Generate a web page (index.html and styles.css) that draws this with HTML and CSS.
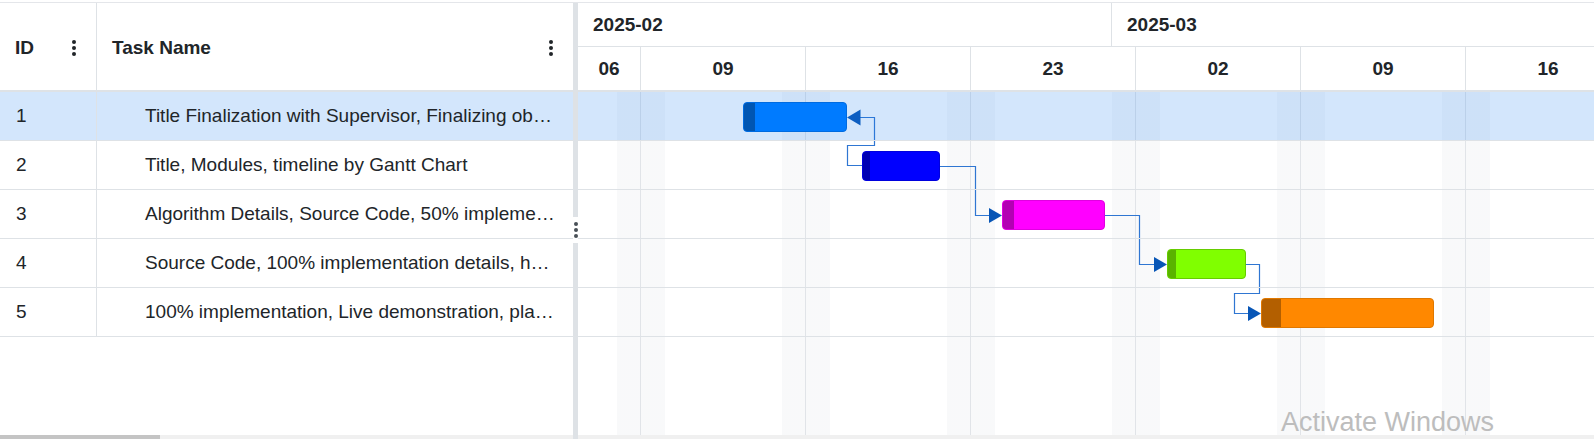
FILE: index.html
```html
<!DOCTYPE html>
<html lang="en">
<head>
<meta charset="utf-8">
<title>Gantt</title>
<link rel="stylesheet" href="styles.css">
</head>
<body>
<div class="gantt">
  <div class="grid-pane">
    <div class="grid-header">
      <div class="hcell col-id"><span>ID</span><svg class="kebab" width="4" height="16" viewBox="0 0 4 16"><circle cx="2" cy="2" r="2"/><circle cx="2" cy="8" r="2"/><circle cx="2" cy="14" r="2"/></svg></div>
      <div class="hcell col-name"><span>Task Name</span><svg class="kebab" width="4" height="16" viewBox="0 0 4 16"><circle cx="2" cy="2" r="2"/><circle cx="2" cy="8" r="2"/><circle cx="2" cy="14" r="2"/></svg></div>
    </div>
    <div class="grid-rows">
      <div class="grow selected"><div class="cell col-id">1</div><div class="cell col-name">Title Finalization with Supervisor, Finalizing objectives and scope</div></div>
      <div class="grow"><div class="cell col-id">2</div><div class="cell col-name">Title, Modules, timeline by Gantt Chart</div></div>
      <div class="grow"><div class="cell col-id">3</div><div class="cell col-name">Algorithm Details, Source Code, 50% implementation details</div></div>
      <div class="grow"><div class="cell col-id">4</div><div class="cell col-name">Source Code, 100% implementation details, hardware setup</div></div>
      <div class="grow"><div class="cell col-id">5</div><div class="cell col-name">100% implementation, Live demonstration, plagiarism report</div></div>
    </div>
    <div class="filler"></div>
    <div class="hscroll"><div class="thumb"></div></div>
  </div>

  <div class="splitter">
    <div class="split-handle"><svg width="4" height="16" viewBox="0 0 4 16"><circle cx="2" cy="2" r="2"/><circle cx="2" cy="8" r="2"/><circle cx="2" cy="14" r="2"/></svg></div>
  </div>

  <div class="chart-pane">
    <div class="timeline">
      <div class="tier tier-month">
        <div class="month feb">2025-02</div>
        <div class="month mar">2025-03</div>
      </div>
      <div class="tier tier-week">
        <div class="wk first">06</div>
        <div class="wk">09</div>
        <div class="wk">16</div>
        <div class="wk">23</div>
        <div class="wk">02</div>
        <div class="wk">09</div>
        <div class="wk">16</div>
      </div>
    </div>
    <div class="chart-body">
      <div class="chart-cols">
        <div class="col first"></div>
        <div class="col"></div>
        <div class="col"></div>
        <div class="col"></div>
        <div class="col"></div>
        <div class="col"></div>
        <div class="col"></div>
      </div>
      <div class="chart-rows">
        <div class="crow selected"><div class="bar c-blue" style="left:165px;width:104px"><div class="progress" style="width:11px"></div></div></div>
        <div class="crow"><div class="bar c-navy" style="left:284px;width:78px"><div class="progress" style="width:7px"></div></div></div>
        <div class="crow"><div class="bar c-magenta" style="left:424px;width:103px"><div class="progress" style="width:11px"></div></div></div>
        <div class="crow"><div class="bar c-green" style="left:589px;width:79px"><div class="progress" style="width:8px"></div></div></div>
        <div class="crow"><div class="bar c-orange" style="left:683px;width:173px"><div class="progress" style="width:19px"></div></div></div>
      </div>
      <svg class="connectors" width="1016" height="345" viewBox="0 0 1016 345">
        <path class="line" d="M284 73.5 H269.5 V53.5 H296.5 V25.5 H282"/>
        <polygon class="arrow" points="269,25.5 282.5,17.5 282.5,33.5"/>
        <path class="line" d="M362 74.5 H397.5 V123.5 H411"/>
        <polygon class="arrow" points="424,123.5 411,116 411,131"/>
        <path class="line" d="M527 123.5 H561.5 V172.5 H576"/>
        <polygon class="arrow" points="589,172.5 576,165 576,180"/>
        <path class="line" d="M668 172.5 H681.5 V201.5 H656.5 V221.5 H670"/>
        <polygon class="arrow" points="683,221.5 670,214 670,229"/>
      </svg>
    </div>
    <div class="hscroll"></div>
  </div>

  <div class="watermark">Activate Windows</div>
</div>
</body>
</html>
```

FILE: styles.css
```css
:root {
  --line: #dee2e6;
  --shade: rgba(100, 116, 139, 0.045);
  --select: rgba(35, 130, 240, 0.2);
}

* { box-sizing: border-box; }

body {
  margin: 0;
  font-family: "Liberation Sans", Arial, sans-serif;
  color: #212529;
  background: #fff;
  overflow: hidden;
}

.gantt {
  position: relative;
  margin-top: 2px;
  border-top: 1px solid #e4e6ea;
  height: 437px;
  display: flex;
}

/* ---------- grid ---------- */
.grid-pane {
  width: 573px;
  flex: none;
  display: flex;
  flex-direction: column;
}

.grid-header {
  height: 89px;
  flex: none;
  display: flex;
  border-bottom: 2px solid var(--line);
}

.hcell {
  display: flex;
  align-items: center;
  justify-content: space-between;
  font-weight: bold;
  font-size: 19px;
  padding: 3px 20px 0 15px;
}

.kebab { fill: #212529; display: block; }

.col-id {
  width: 97px;
  flex: none;
  border-right: 1px solid var(--line);
}

.col-name {
  flex: 1;
  min-width: 0;
}

.grow {
  display: flex;
  height: 49px;
  border-bottom: 1px solid var(--line);
  font-size: 19px;
  line-height: 48px;
}

.cell {
  white-space: nowrap;
  overflow: hidden;
  text-overflow: ellipsis;
}

.cell.col-id { padding-left: 16px; }
.cell.col-name { padding: 0 18px 0 48px; }

.selected { background: var(--select); }

.filler { flex: 1; }

.hscroll {
  height: 4px;
  flex: none;
  background: #f0f0f0;
}

.thumb {
  width: 160px;
  height: 100%;
  background: #c4c4c4;
}

/* ---------- splitter ---------- */
.splitter {
  width: 5px;
  flex: none;
  background: var(--line);
  display: flex;
  flex-direction: column;
  justify-content: center;
  padding-top: 17px;
}

.split-handle {
  height: 26px;
  background: #fff;
  display: flex;
  align-items: center;
  justify-content: center;
}

.split-handle svg { fill: #495057; display: block; }

/* ---------- chart ---------- */
.chart-pane {
  flex: 1;
  min-width: 0;
  overflow: hidden;
  display: flex;
  flex-direction: column;
}

.timeline {
  height: 89px;
  flex: none;
  border-bottom: 2px solid var(--line);
}

.tier { display: flex; }

.tier-month {
  height: 44px;
  border-bottom: 1px solid var(--line);
}

.month {
  display: flex;
  align-items: center;
  padding-left: 15px;
  font-weight: bold;
  font-size: 19px;
}

.month.feb {
  width: 534px;
  flex: none;
  border-right: 1px solid var(--line);
}

.month.mar { flex: 1; }

.tier-week { height: 43px; }

.wk {
  width: 165px;
  flex: none;
  border-left: 1px solid var(--line);
  display: flex;
  align-items: center;
  justify-content: center;
  font-weight: bold;
  font-size: 19px;
  padding-top: 1px;
}

.wk.first {
  width: 62px;
  border-left: 0;
}

.chart-body {
  flex: 1;
  min-height: 0;
  overflow: hidden;
  display: grid;
}

.chart-cols,
.chart-rows,
.connectors {
  grid-area: 1 / 1;
}

.chart-cols { display: flex; }

.col {
  width: 165px;
  flex: none;
  border-left: 1px solid #e1e4e8;
  background: linear-gradient(to right,
    var(--shade) 0 24px,
    transparent 24px calc(100% - 23px),
    var(--shade) calc(100% - 23px));
}

.col.first {
  width: 62px;
  border-left: 0;
  background: linear-gradient(to right, transparent calc(100% - 23px), var(--shade) calc(100% - 23px));
}

.crow {
  position: relative;
  height: 49px;
  border-bottom: 1px solid var(--line);
}

.bar {
  position: absolute;
  top: 10px;
  height: 30px;
  border: 1px solid;
  border-radius: 4px;
  overflow: hidden;
}

.progress { height: 100%; }

.c-blue { background: #007bff; border-color: #006be0; }
.c-blue .progress { background: #0056b3; }
.c-navy { background: #0000ff; border-color: #0000dd; }
.c-navy .progress { background: #0000b3; }
.c-magenta { background: #ff00ff; border-color: #e000e0; }
.c-magenta .progress { background: #b300b3; }
.c-green { background: #80ff00; border-color: #66cc00; }
.c-green .progress { background: #5ab300; }
.c-orange { background: #ff8800; border-color: #e07800; }
.c-orange .progress { background: #b35f00; }

.connectors {
  align-self: start;
  pointer-events: none;
}

.connectors .line {
  fill: none;
  stroke: #2f76d2;
  stroke-width: 1.2;
}

.connectors .arrow { fill: #0856b6; }

/* ---------- overlay ---------- */
.watermark {
  position: absolute;
  left: 1281px;
  top: 406px;
  font-size: 27px;
  line-height: 27px;
  color: #bdbdbd;
  white-space: nowrap;
  pointer-events: none;
}
```
